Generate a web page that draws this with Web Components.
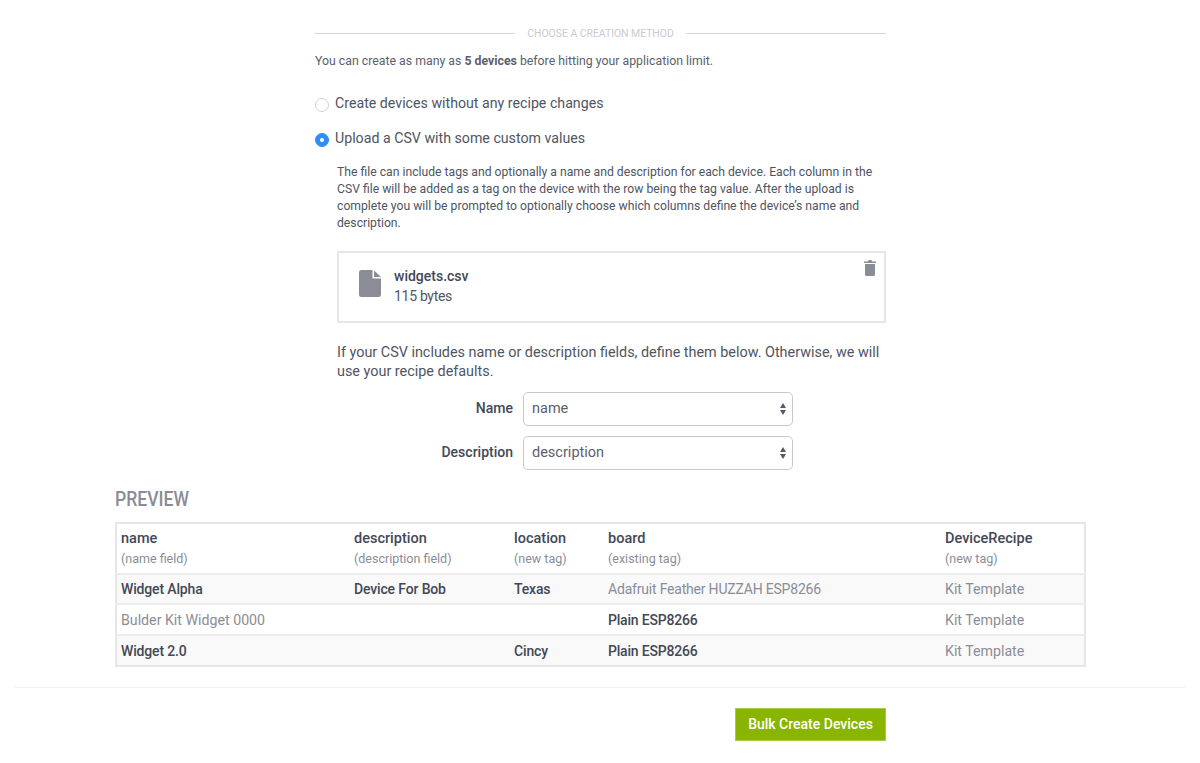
<!DOCTYPE html>
<html lang="en">
<head>
<meta charset="utf-8">
<title>Choose a creation method</title>
<style>
    html, body { margin: 0; background: #fff; }
    body {
        font-family: Roboto, "Noto Sans", sans-serif;
        color: #4f5563;
        font-size: 13px;
    }
</style>
</head>
<body>
<bulk-page>
    <method-divider>CHOOSE A CREATION METHOD</method-divider>
    <p slot="limit">You can create as many as <b>5 devices</b> before hitting your application limit.</p>
    <radio-option slot="options">Create devices without any recipe changes</radio-option>
    <radio-option slot="options" checked>Upload a CSV with some custom values</radio-option>
    <upload-details slot="details">
        The file can include tags and optionally a name and description for each device. Each column in the
        CSV file will be added as a tag on the device with the row being the tag value. After the upload is
        complete you will be prompted to optionally choose which columns define the device’s name and
        description.
        <file-card slot="card" name="widgets.csv" size="115 bytes"></file-card>
        <span slot="hint">If your CSV includes name or description fields, define them below. Otherwise, we will use your recipe defaults.</span>
        <select-row slot="fields" label="Name" value="name"></select-row>
        <select-row slot="fields" label="Description" value="description"></select-row>
    </upload-details>
    <preview-table slot="preview"></preview-table>
    <bulk-footer slot="footer">Bulk Create Devices</bulk-footer>
</bulk-page>

<script>
class BulkPage extends HTMLElement {
    constructor() {
        super()
        this.attachShadow({mode: 'open'})
        this.shadowRoot.innerHTML = `
            <style>
                :host { display: block; height: 763px; padding-top: 25px; box-sizing: border-box; overflow: hidden; }
                .column { width: 571px; margin-left: 315px; }
                ::slotted(p) { margin: 11px 0 0; font-size: 12.3px; line-height: 18px; color: #5b606d; }
                .options { display: flex; flex-direction: column; gap: 14px; margin-top: 22px; }
                .wide { margin: 17px 0 0 115px; width: 971px; }
            </style>
            <div class="column">
                <slot></slot>
                <slot name="limit"></slot>
                <div class="options"><slot name="options"></slot></div>
                <slot name="details"></slot>
            </div>
            <div class="wide"><slot name="preview"></slot></div>
            <slot name="footer"></slot>`
    }
}

class MethodDivider extends HTMLElement {
    constructor() {
        super()
        this.attachShadow({mode: 'open'})
        this.shadowRoot.innerHTML = `
            <style>
                :host { display: flex; align-items: center; gap: 12px; height: 16px; color: #c9cbd0; font-size: 10.4px; white-space: nowrap; }
                i { flex: 1; height: 1px; background: #d4d5d8; }
            </style>
            <i></i><slot></slot><i></i>`
    }
}

class RadioOption extends HTMLElement {
    constructor() {
        super()
        this.attachShadow({mode: 'open'})
        this.shadowRoot.innerHTML = `
            <style>
                :host { display: flex; align-items: center; gap: 6px; height: 21px; font-size: 14.2px; color: #4f5563; }
                .dot { width: 12px; height: 12px; margin-top: 4px; border-radius: 50%; border: 1.5px solid #d2d2d2; background: #fff; flex: none; display: flex; align-items: center; justify-content: center; }
                :host([checked]) .dot { background: #2f8ef5; border-color: #2f8ef5; }
                :host([checked]) .dot::after { content: ''; width: 4px; height: 4px; border-radius: 50%; background: #fff; }
            </style>
            <span class="dot"></span><span><slot></slot></span>`
    }
}

class UploadDetails extends HTMLElement {
    constructor() {
        super()
        this.attachShadow({mode: 'open'})
        this.shadowRoot.innerHTML = `
            <style>
                :host { display: block; margin: 16px 0 0 22px; font-size: 12.2px; line-height: 17px; color: #4f5563; }
                .hint { margin-top: 20px; font-size: 14.4px; line-height: 19px; }
                .fields { display: flex; flex-direction: column; gap: 10px; margin-top: 11px; }
            </style>
            <div><slot></slot></div>
            <slot name="card"></slot>
            <div class="hint"><slot name="hint"></slot></div>
            <div class="fields"><slot name="fields"></slot></div>`
    }
}

class FileCard extends HTMLElement {
    constructor() {
        super()
        this.attachShadow({mode: 'open'})
        this.shadowRoot.innerHTML = `
            <style>
                :host { display: flex; position: relative; align-items: center; gap: 13px; height: 72px; margin-top: 19px; padding-left: 20px; box-sizing: border-box; border: 2px solid #e6e6e6; font-size: 14px; letter-spacing: -.3px; line-height: 20px; color: #4f5563; }
                svg { display: block; flex: none; margin-bottom: 7px; }
                .info { margin-bottom: 3px; }
                b { display: block; letter-spacing: 0; font-weight: 500; color: #434857; }
                .trash { position: absolute; top: 7px; right: 8px; margin: 0; }
            </style>
            <svg width="22" height="27" viewBox="0 0 22 27"><path d="M2.5 0H13.5V8.5H22V24.5a2.5 2.5 0 0 1-2.5 2.5H2.5A2.5 2.5 0 0 1 0 24.5V2.5A2.5 2.5 0 0 1 2.5 0ZM15 .5L22 7H15Z" fill="#8a8d96" fill-rule="evenodd"/></svg>
            <div class="info"><b>${this.getAttribute('name')}</b>${this.getAttribute('size')}</div>
            <svg class="trash" width="12" height="16" viewBox="0 0 12 16"><path d="M4.5 0H7.5L8 1.5H12V3H0V1.5H4ZM1 4H11V14.5a1.5 1.5 0 0 1-1.5 1.5H2.5A1.5 1.5 0 0 1 1 14.5Z" fill="#8a8d96"/></svg>`
    }
}

class SelectRow extends HTMLElement {
    constructor() {
        super()
        this.attachShadow({mode: 'open'})
        this.shadowRoot.innerHTML = `
            <style>
                :host { display: flex; align-items: center; gap: 10px; height: 34px; font-size: 14.5px; }
                label { width: 176px; margin-top: -2px; text-align: right; font-size: 14px; font-weight: 500; color: #434857; }
                .box { flex: none; width: 270px; height: 34px; box-sizing: border-box; display: flex; align-items: center; justify-content: space-between; padding: 0 6px 0 8px; border: 1px solid #c9c9c9; border-radius: 5px; color: #5b606d; }
                .box span { margin-top: -2px; }
                svg { display: block; }
            </style>
            <label>${this.getAttribute('label')}</label>
            <div class="box"><span>${this.getAttribute('value')}</span>
                <svg width="6" height="12" viewBox="0 0 6 12"><path d="M3 0L6 5H0ZM0 7H6L3 12Z" fill="#555a66"/></svg></div>`
    }
}

const previewColumns = [
    ['name', '(name field)'],
    ['description', '(description field)'],
    ['location', '(new tag)'],
    ['board', '(existing tag)'],
    ['DeviceRecipe', '(new tag)']
]
// a leading ! marks a value coming from the csv (dark), everything else is a default
const previewRows = [
    ['!Widget Alpha', '!Device For Bob', '!Texas', 'Adafruit Feather HUZZAH ESP8266', 'Kit Template'],
    ['Bulder Kit Widget 0000', '', '', '!Plain ESP8266', 'Kit Template'],
    ['!Widget 2.0', '', '!Cincy', '!Plain ESP8266', 'Kit Template']
]

class PreviewTable extends HTMLElement {
    constructor() {
        super()
        this.attachShadow({mode: 'open'})
        const head = previewColumns.map(c => `<th>${c[0]}<small>${c[1]}</small></th>`).join('')
        const body = previewRows.map(r => '<tr>' + r.map(v => v[0] === '!'
            ? `<td class="set">${v.slice(1)}</td>` : `<td>${v}</td>`).join('') + '</tr>').join('')
        this.shadowRoot.innerHTML = `
            <style>
                :host { display: block; }
                h2 { margin: 0 0 11px; font-size: 20px; line-height: 24px; font-weight: 500; color: #8a8d96; transform: scaleX(.88); transform-origin: left; }
                table { width: 971px; table-layout: fixed; border-collapse: collapse; border: 2px solid #e6e6e6; font-size: 14.2px; }
                th, td { padding: 0 0 0 5px; text-align: left; }
                th:first-child, td:first-child { padding-left: 4px; }
                th { height: 49px; font-size: 14.5px; font-weight: 500; color: #434857; line-height: 20px; vertical-align: middle; }
                small { display: block; font-size: 12.5px; font-weight: 400; color: #8a8d96; }
                td { height: 29px; color: #8a8d96; border-top: 2px solid #ececec; }
                tbody tr:first-child td { height: 28px; }
                td.set { font-size: 14px; letter-spacing: -.15px; font-weight: 500; color: #434857; }
                td:nth-child(4) { font-size: 14px; letter-spacing: -.2px; }
                tbody tr:nth-child(odd) td { background: #f9f9f9; }
            </style>
            <h2>PREVIEW</h2>
            <table>
                <colgroup><col style="width:233px"><col style="width:160px"><col style="width:94px"><col style="width:337px"><col></colgroup>
                <thead><tr>${head}</tr></thead>
                <tbody>${body}</tbody>
            </table>`
    }
}

class BulkFooter extends HTMLElement {
    constructor() {
        super()
        this.attachShadow({mode: 'open'})
        this.shadowRoot.innerHTML = `
            <style>
                :host { display: flex; justify-content: flex-end; margin: 20px 15px 0; padding: 20px 299px 0 0; border-top: 1px solid #f0f0f0; }
                button { width: 151px; height: 33px; padding: 0 0 2px; border: 1px solid #a5cc4d; background: #89b500; color: #fff; font: 500 14px Roboto, sans-serif; }
            </style>
            <button><slot></slot></button>`
    }
}

customElements.define('bulk-page', BulkPage)
customElements.define('method-divider', MethodDivider)
customElements.define('radio-option', RadioOption)
customElements.define('upload-details', UploadDetails)
customElements.define('file-card', FileCard)
customElements.define('select-row', SelectRow)
customElements.define('preview-table', PreviewTable)
customElements.define('bulk-footer', BulkFooter)
</script>
</body>
</html>
